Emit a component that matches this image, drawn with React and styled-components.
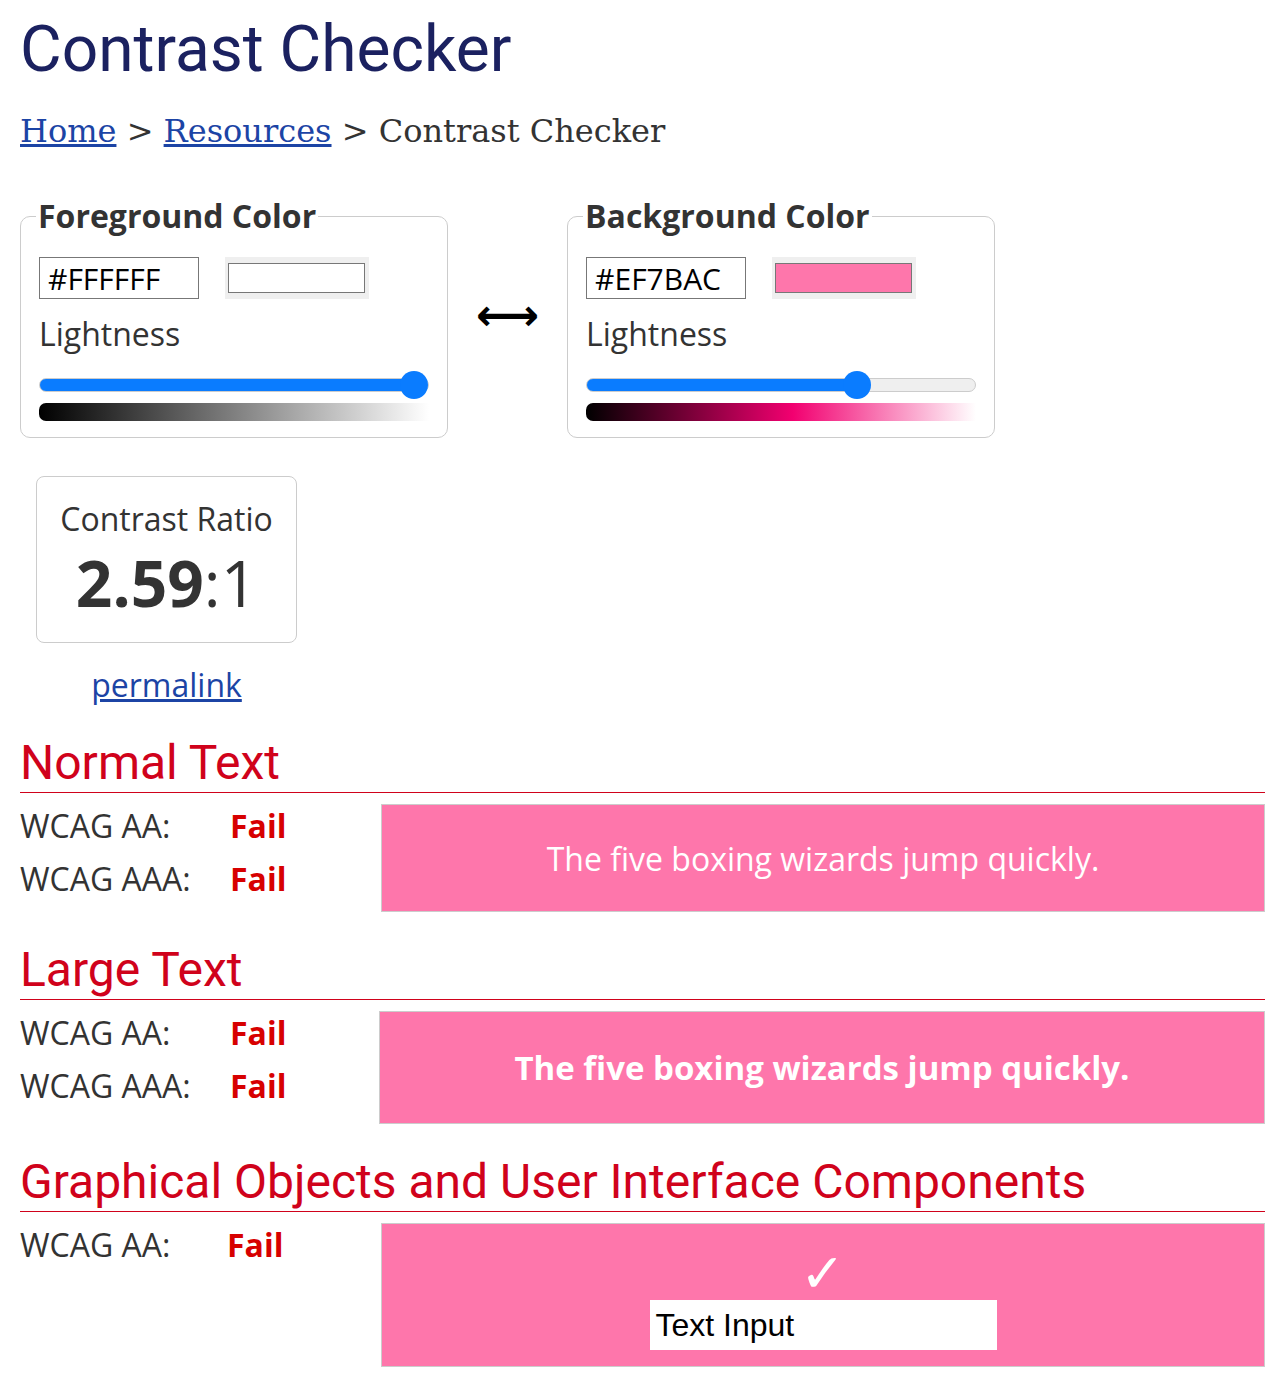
import React from "react";
import styled, { createGlobalStyle } from "styled-components";

const GlobalStyle = createGlobalStyle`
  body {
    margin: 0;
    background: #fff;
    font-family: "Open Sans", "Noto Sans", sans-serif;
    color: #333;
  }
`;

const PINK = "#fe76ab";
const RED = "#d0021b";

const Page = styled.div`
  padding: 0 19px 0 20px;
`;

const Title = styled.h1`
  margin: 0;
  padding-top: 12px;
  font-family: Roboto, sans-serif;
  font-weight: 400;
  font-size: 64px;
  line-height: 76px;
  color: #1b2160;
`;

const Crumbs = styled.nav`
  margin-top: 24px;
  font-family: "DejaVu Serif", serif;
  font-size: 32px;
  color: #333;

  a {
    color: #1c44a5;
  }
`;

const Pickers = styled.div`
  display: flex;
  align-items: center;
  gap: 28px;
  margin-top: 50px;
`;

const Fieldset = styled.fieldset`
  margin: 0;
  width: 428px;
  box-sizing: border-box;
  border: 1px solid #ccc;
  border-radius: 10px;
  padding: 2px 18px 16px 18px;
`;

const Legend = styled.legend`
  margin-left: -3px;
  padding: 0 2px;
  font-weight: 700;
  font-size: 32px;
  line-height: 32px;
`;

const InputRow = styled.div`
  display: flex;
  align-items: center;
  gap: 26px;
  margin-top: 23px;
`;

const HexInput = styled.input`
  width: 160px;
  height: 42px;
  box-sizing: border-box;
  border: 1px solid #777;
  padding: 0 8px;
  font-family: "Open Sans", sans-serif;
  font-size: 30px;
  color: #000;
  background: #fff;
`;

const Swatch = styled.div`
  width: 144px;
  height: 42px;
  box-sizing: border-box;
  background: #efefef;
  padding: 6px 4px 6px 3px;
  display: flex;
`;

const SwatchColor = styled.div`
  flex: 1;
  border: 1px solid #777;
  background: ${p => p.$color};
`;

const Label = styled.div`
  margin-top: 14px;
  font-size: 32px;
  line-height: 42px;
`;

const Range = styled.input`
  -webkit-appearance: none;
  appearance: none;
  display: block;
  width: 390px;
  height: 28px;
  margin: 16px 0 0 0;
  background: transparent;

  &::-webkit-slider-runnable-track {
    height: 14px;
    border-radius: 7px;
    box-sizing: border-box;
    border: 1px solid #ccc;
    background: ${p =>
      `linear-gradient(to right, #0a7cff 0 ${p.$fill}%, #efefef ${p.$fill}% 100%)`};
  }

  &::-webkit-slider-thumb {
    -webkit-appearance: none;
    width: 28px;
    height: 28px;
    margin-top: -8px;
    border-radius: 50%;
    border: 0;
    background: #0a7cff;
  }
`;

const Gradient = styled.div`
  width: 390px;
  height: 18px;
  margin-top: 4px;
  border-radius: 7px 0 0 7px;
  background: ${p => p.$bg};
`;

const Swap = styled.div`
  font-family: "DejaVu Sans", sans-serif;
  font-size: 44px;
  font-weight: 700;
  color: #000;
  margin-top: -10px;
`;

const RatioBox = styled.div`
  margin: 38px 0 0 16px;
  width: 261px;
  height: 167px;
  box-sizing: border-box;
  border: 1px solid #ccc;
  border-radius: 8px;
  text-align: center;
  padding-top: 16px;
`;

const RatioLabel = styled.div`
  font-size: 32px;
  line-height: 52px;
`;

const RatioValue = styled.div`
  font-size: 64px;
  line-height: 76px;

  b {
    font-weight: 700;
  }
`;

const Permalink = styled.a`
  display: block;
  width: 261px;
  margin: 22px 0 0 16px;
  text-align: center;
  font-size: 32px;
  line-height: 40px;
  color: #1c44a5;
`;

const Section = styled.section`
  margin-top: ${p => p.$top}px;
`;

const Heading = styled.h2`
  margin: 0;
  font-family: Roboto, sans-serif;
  font-weight: 400;
  font-size: 48px;
  line-height: 54px;
  color: ${RED};
  border-bottom: 1px solid ${RED};
  padding-bottom: 2px;
`;

const Results = styled.div`
  display: grid;
  grid-template-columns: ${p => p.$left}px 1fr;
  margin-top: 11px;
`;

const Checks = styled.div`
  margin-top: -5px;
`;

const CheckRow = styled.div`
  display: grid;
  grid-template-columns: ${p => p.$label}px auto;
  font-size: 32px;
  line-height: 53px;
`;

const Fail = styled.span`
  font-weight: 700;
  color: #d70000;
`;

const Sample = styled.div`
  height: ${p => p.$h}px;
  box-sizing: border-box;
  border: 1px solid #ccc;
  background: ${PINK};
  color: #fff;
  display: flex;
  flex-direction: column;
  align-items: center;
  justify-content: center;
  font-size: ${p => (p.$large ? 33 : 32)}px;
  font-weight: ${p => (p.$large ? 700 : 400)};
`;

const WidgetSample = styled(Sample)`
  justify-content: flex-end;
  padding-bottom: 16px;
`;

const Tick = styled.div`
  font-family: "DejaVu Serif", serif;
  font-size: 54px;
  line-height: 44px;
  margin: 0 0 4px -2px;
`;

const TextBox = styled.div`
  width: 347px;
  height: 50px;
  box-sizing: border-box;
  background: #fff;
  color: #000;
  font-family: "Liberation Sans", Arial, sans-serif;
  font-size: 32px;
  line-height: 50px;
  padding-left: 6px;
  text-align: left;
`;

const ColorPicker = ({ title, hex, color, lightness, gradient }) => {
  const thumbPct = ((lightness * (390 - 28) + 14) / 390) * 100;
  return (
    <Fieldset>
      <Legend>{title}</Legend>
      <InputRow>
        <HexInput defaultValue={hex} />
        <Swatch>
          <SwatchColor $color={color} />
        </Swatch>
      </InputRow>
      <Label>Lightness</Label>
      <Range
        type="range"
        min="0"
        max="100"
        defaultValue={lightness * 100}
        $fill={thumbPct}
      />
      <Gradient $bg={gradient} />
    </Fieldset>
  );
};

const ResultSection = ({ title, top, left, label, rows, children }) => (
  <Section $top={top}>
    <Heading>{title}</Heading>
    <Results $left={left}>
      <Checks>
        {rows.map(r => (
          <CheckRow key={r} $label={label}>
            <span>{r}</span>
            <Fail>Fail</Fail>
          </CheckRow>
        ))}
      </Checks>
      {children}
    </Results>
  </Section>
);

export default function App() {
  return (
    <Page>
      <GlobalStyle />
      <Title>Contrast Checker</Title>
      <Crumbs>
        <a href="#">Home</a> &gt; <a href="#">Resources</a> &gt; Contrast Checker
      </Crumbs>

      <Pickers>
        <ColorPicker
          title="Foreground Color"
          hex="#FFFFFF"
          color="#fff"
          lightness={1}
          gradient="linear-gradient(to right, #000, #fff)"
        />
        <Swap>⟷</Swap>
        <ColorPicker
          title="Background Color"
          hex="#EF7BAC"
          color={PINK}
          lightness={0.71}
          gradient="linear-gradient(to right, #000, #f20070 53%, #fff)"
        />
      </Pickers>

      <RatioBox>
        <RatioLabel>Contrast Ratio</RatioLabel>
        <RatioValue>
          <b>2.59</b>:1
        </RatioValue>
      </RatioBox>
      <Permalink href="#">permalink</Permalink>

      <ResultSection
        title="Normal Text"
        top={31}
        left={361}
        label={210}
        rows={["WCAG AA:", "WCAG AAA:"]}
      >
        <Sample $h={108}>The five boxing wizards jump quickly.</Sample>
      </ResultSection>

      <ResultSection
        title="Large Text"
        top={31}
        left={359}
        label={210}
        rows={["WCAG AA:", "WCAG AAA:"]}
      >
        <Sample $h={113} $large>
          The five boxing wizards jump quickly.
        </Sample>
      </ResultSection>

      <ResultSection
        title="Graphical Objects and User Interface Components"
        top={31}
        left={361}
        label={207}
        rows={["WCAG AA:"]}
      >
        <WidgetSample $h={144}>
          <Tick>✓</Tick>
          <TextBox>Text Input</TextBox>
        </WidgetSample>
      </ResultSection>
    </Page>
  );
}
